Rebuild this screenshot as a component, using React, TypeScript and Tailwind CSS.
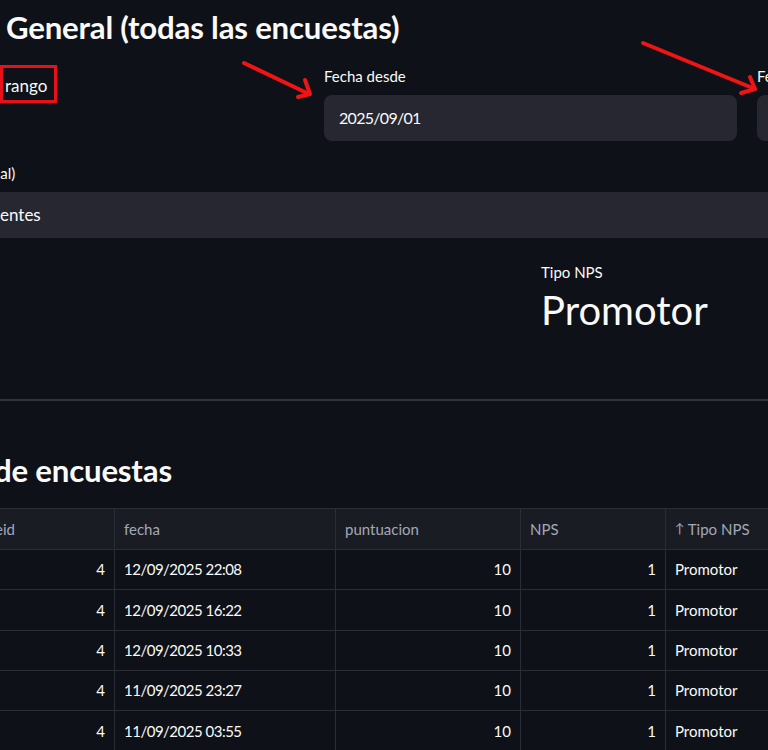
import type { ReactNode } from "react";

const ROWS = [
  { id: 4, fecha: "12/09/2025 22:08", punt: 10, nps: 1, tipo: "Promotor" },
  { id: 4, fecha: "12/09/2025 16:22", punt: 10, nps: 1, tipo: "Promotor" },
  { id: 4, fecha: "12/09/2025 10:33", punt: 10, nps: 1, tipo: "Promotor" },
  { id: 4, fecha: "11/09/2025 23:27", punt: 10, nps: 1, tipo: "Promotor" },
  { id: 4, fecha: "11/09/2025 03:55", punt: 10, nps: 1, tipo: "Promotor" },
];

function Cell({ children, w, right, last }: { children: ReactNode; w: string; right?: boolean; last?: boolean }) {
  return (
    <div
      className={`${w} flex h-full shrink-0 items-center px-[9px] ${right ? "justify-end" : ""} ${
        last ? "" : "border-r border-[#2a2c36]"
      }`}
    >
      {children}
    </div>
  );
}

export default function App() {
  return (
    <div
      className="relative h-[750px] w-[768px] overflow-hidden bg-[#0e1117] text-[#fafafa]"
      style={{ fontFamily: "Lato, 'Noto Sans', sans-serif" }}
    >
      {/* Title */}
      <h2 className="pl-[6px] pt-[9px] text-[31.2px] font-bold leading-[36px] tracking-[-0.2px]">
        General (todas las encuestas)
      </h2>

      {/* Filter row */}
      <div className="mt-[21px] flex">
        <div className="w-[324px] shrink-0 pl-[5px] pt-[10px] text-[17px] leading-[20px]">rango</div>
        <div className="w-[413px] shrink-0">
          <div className="h-[20px] text-[15px] leading-[20px]">Fecha desde</div>
          <div className="mt-[9px] flex h-[46px] items-center rounded-[8px] bg-[#262730] px-[15px] text-[16px] tracking-[-0.7px]">
            2025/09/01
          </div>
        </div>
        <div className="ml-[20px] w-[300px] shrink-0">
          <div className="h-[20px] text-[15px] leading-[20px]">Fecha hasta</div>
          <div className="mt-[9px] h-[46px] rounded-[8px] bg-[#262730]" />
        </div>
      </div>

      {/* Select */}
      <div className="mt-[22px] -ml-[8px] h-[20px] text-[15px] leading-[20px]">nal)</div>
      <div className="mt-[9px] flex h-[46px] items-center bg-[#262730] text-[17px]">
        <span>entes</span>
      </div>

      {/* Metric */}
      <div className="mt-[24px] pl-[541px]">
        <div className="h-[20px] text-[15px] leading-[20px]">Tipo NPS</div>
        <div className="mt-[4px] text-[40px] leading-[48px]">Promotor</div>
      </div>

      <div className="mt-[65px] h-[2px] bg-[#31333f]" />

      {/* Table heading */}
      <h3 className="-ml-[6px] mt-[51px] text-[31.2px] font-bold leading-[36px] tracking-[-0.2px]">de encuestas</h3>

      {/* Data table */}
      <div className="mt-[20px] border-t border-[#2a2c36] text-[15px]">
        <div className="flex h-[41px] border-b border-[#2a2c36] bg-[#1a1c24] text-[#a3a8b8]">
          <Cell w="w-[115px]">
            <span className="-ml-[14px]">eid</span>
          </Cell>
          <Cell w="w-[221px]">fecha</Cell>
          <Cell w="w-[185px]">puntuacion</Cell>
          <Cell w="w-[145px]">NPS</Cell>
          <Cell w="w-[102px]" last>
            <span className="mr-[3px] text-[13px]">↑</span>Tipo NPS
          </Cell>
        </div>
        {ROWS.map((r, i) => (
          <div key={i} className="flex h-[40.3px] border-b border-[#2a2c36]">
            <Cell w="w-[115px]" right>
              {r.id}
            </Cell>
            <Cell w="w-[221px]">
              <span className="tracking-[-0.5px]">{r.fecha}</span>
            </Cell>
            <Cell w="w-[185px]" right>
              {r.punt}
            </Cell>
            <Cell w="w-[145px]" right>
              {r.nps}
            </Cell>
            <Cell w="w-[102px]" last>
              {r.tipo}
            </Cell>
          </div>
        ))}
      </div>

      {/* Annotations */}
      <div className="absolute left-0 top-[65px] h-[38px] w-[57px] border-[3px] border-[#e8101a]" />
      <svg className="absolute left-0 top-0" width="768" height="150" aria-hidden="true">
        <g stroke="#f01414" strokeWidth="4" strokeLinecap="round" fill="none">
          <line x1="244" y1="63" x2="309" y2="94" />
          <polyline points="305,80 310,94 298,97" strokeLinejoin="round" />
          <line x1="643" y1="43" x2="755" y2="89" />
          <polyline points="750,77 755,89 741,93" strokeLinejoin="round" />
        </g>
      </svg>
    </div>
  );
}
